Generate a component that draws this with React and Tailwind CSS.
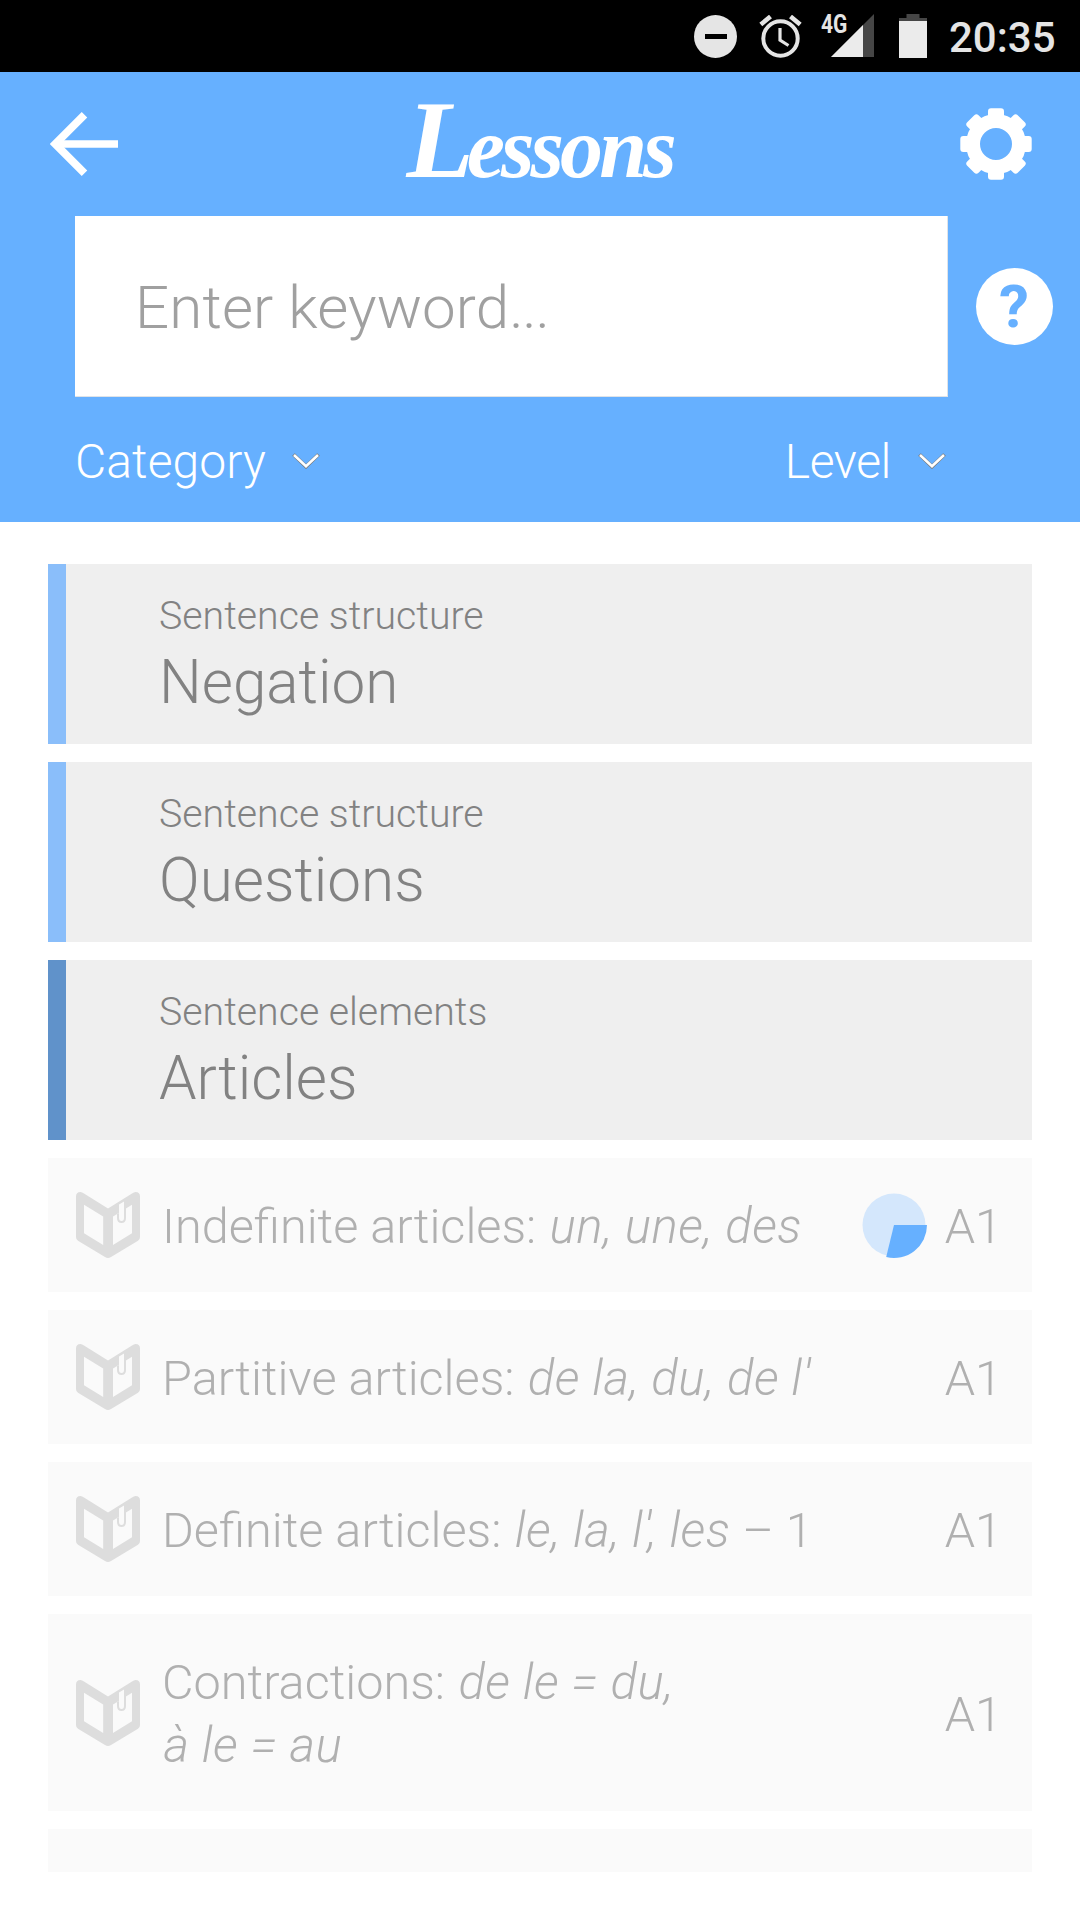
const GROUPS = [
  { topic: "Sentence structure", name: "Negation", bar: "bg-[#8abefa]" },
  { topic: "Sentence structure", name: "Questions", bar: "bg-[#8abefa]" },
  { topic: "Sentence elements", name: "Articles", bar: "bg-[#6092ca]" },
];

function Em({ children }) {
  return <i className="ml-[1.5px] text-[49.2px] tracking-[0.45px]">{children}</i>;
}

const LESSONS = [
  { text: <>Indefinite articles: <Em>un, une, des</Em></>, progress: true, height: "h-[134px]" },
  { text: <>Partitive articles: <Em>de la, du, de l'</Em></>, height: "h-[134px]" },
  { text: <>Definite articles: <Em>le, la, l<span className="tracking-[-4px]">'</span>, les</Em> – 1</>, height: "h-[134px]" },
  { text: <>Contractions: <Em>de le = du,</Em><br /><Em>à le = au</Em></>, height: "h-[197px]" },
];

function StatusBar() {
  return (
    <div className="flex h-[72px] items-start bg-black pl-[694px] text-[#e5e5e5]">
      <svg className="mt-[15px] h-[43px] w-[43px]" viewBox="0 0 43 43">
        <circle cx="21.5" cy="21.5" r="21.5" fill="#e5e5e5" />
        <path d="M11 21.5H33" stroke="#000" strokeWidth="5" />
      </svg>
      <svg className="mt-[15px] ml-[22px] h-[44px] w-[43px]" viewBox="0 0 43 44" fill="none" stroke="#e5e5e5">
        <circle cx="21.5" cy="23.5" r="17.2" strokeWidth="4" />
        <path d="M21 13V25.2L29.5 30.5" strokeWidth="3.2" />
        <path d="M1.8 9.5 11.5 1.5M41.2 9.5 31.5 1.5" strokeWidth="4.6" />
      </svg>
      <span className="mt-[13px] ml-[19px] w-[27px] origin-left scale-x-[0.84] text-[25px] leading-[24px] font-bold">4G</span>
      <svg className="mt-[14px] -ml-[17px] h-[43px] w-[43px]" viewBox="0 0 43 43">
        <path d="M0 43 43 0V43Z" fill="#464646" />
        <path d="M0 43 32 11V43Z" fill="#ebebeb" />
      </svg>
      <svg className="mt-[14px] ml-[25px] h-[44px] w-[28px]" viewBox="0 0 28 44">
        <path d="M7.5 0H20.5V4H28V8H0V4H7.5Z" fill="#464646" />
        <path d="M0 7H28V44H0Z" fill="#ebebeb" />
      </svg>
      <span className="mt-[13px] ml-[22px] text-[42px] leading-[50px] font-medium">20:35</span>
    </div>
  );
}

function Gear() {
  const angles = [0, 45, 90, 135, 180, 225, 270, 315];
  return (
    <svg className="h-[72px] w-[72px]" viewBox="-36 -36 72 72" fill="#fff">
      {angles.map((a) => (
        <rect key={a} x="-8" y="-35.7" width="16" height="16" rx="3" transform={`rotate(${a})`} />
      ))}
      <circle r="23" fill="none" stroke="#fff" strokeWidth="14" />
    </svg>
  );
}

function Chevron() {
  return (
    <svg className="h-[16px] w-[28px]" viewBox="0 0 28 16" fill="none">
      <path d="M1.5 1.5 14 13.5 26.5 1.5" stroke="#7b7b7b" strokeWidth="3.8" />
      <path d="M2 2 14 13.3 26 2" stroke="#fff" strokeWidth="2.6" />
    </svg>
  );
}

function Book() {
  return (
    <svg className="h-[66px] w-[64px] shrink-0" viewBox="0 0 64 66">
      <path
        fill="#dddddd"
        fillRule="evenodd"
        d="M0 4.5Q0 0 4.5 0Q6 0 8 1.5L32 16.5 56 1.5Q58 0 59.5 0Q64 0 64 4.5V45Q64 47.5 62 48.8L35 65Q32 67 29 65L2 48.8Q0 47.5 0 45ZM8 12.7V41.3L27.2 53V24.5ZM37 24.5V53L56 41.3V12.7Z"
      />
      <path d="M37 24.5 43 21V12L50 8V16L56 12.7 50 16V26Q50 31 45.5 31Q41 31 41 26V22Z" fill="#dddddd" />
      <path d="M43 12.5 48 9.5V26Q48 29 45.5 29Q43 29 43 26Z" fill="#fafafa" />
    </svg>
  );
}

function Progress() {
  return (
    <svg className="mt-[1px] h-[66px] w-[66px]" viewBox="0 0 66 66">
      <circle cx="32" cy="32" r="31.5" fill="#d4e7fc" />
      <path d="M32 32H65A33 33 0 0 1 24.2 64.1Z" fill="#66b0ff" />
    </svg>
  );
}

function Header() {
  return (
    <header className="h-[450px] bg-[#66b0ff] text-white">
      <div className="flex h-[144px] items-center justify-between pr-[48px] pl-[50px]">
        <svg className="h-[64px] w-[68px]" viewBox="0 0 68 64" fill="none" stroke="#fff">
          <path d="M34.5 2.8 5.3 32 34.5 61.2" strokeWidth="7.8" />
          <path d="M8 32H68" strokeWidth="7.5" />
        </svg>
        <h1 className="flex h-[144px] w-[265px] items-baseline font-['Liberation_Serif',serif] text-[86px] leading-[136px] font-bold tracking-[-3.9px] italic">
          <span className="text-[110px] leading-[136px] tracking-[-7px]">L</span>essons
        </h1>
        <Gear />
      </div>
      <div className="flex items-center pl-[75px]">
        <div className="flex h-[181px] w-[873px] items-center border-r border-b border-[#dfe3e8] bg-white pt-[4px] pl-[60px] text-[60px] leading-[70px] font-light tracking-[0.15px] text-[#a0a0a0]">
          Enter keyword<span className="tracking-[-1.2px]">...</span>
        </div>
        <div className="ml-[27.5px] flex h-[77px] w-[77px] items-center justify-center rounded-full bg-white text-[60px] leading-[70px] font-bold text-[#66b0ff]">
          ?
        </div>
      </div>
      <div className="flex h-[128px] items-center justify-between pr-[134px] pl-[75px] text-[48px] leading-[56px] font-light">
        <div className="flex items-center gap-[26px]"><span className="pt-[2px] tracking-[0.1px]">Category</span><Chevron /></div>
        <div className="flex items-center gap-[27px]"><span className="pt-[2px] tracking-[-0.4px]">Level</span><Chevron /></div>
      </div>
    </header>
  );
}

export default function App() {
  return (
    <div className="h-[1920px] w-[1080px] overflow-hidden bg-white font-['Roboto',sans-serif]">
      <StatusBar />
      <Header />
      <main className="flex flex-col gap-[18px] px-[48px] pt-[42px]">
        {GROUPS.map((g) => (
          <section key={g.name} className="flex h-[180px] bg-[#efefef] font-light text-[#828282]">
            <div className={`w-[18px] ${g.bar}`} />
            <div className="pt-[32px] pl-[93px]">
              <div className="text-[39.25px] leading-[40px]">{g.topic}</div>
              <div className="mt-[14px] text-[60.2px] leading-[65px]">{g.name}</div>
            </div>
          </section>
        ))}
        {LESSONS.map((l, i) => (
          <section key={i} className={`flex items-center bg-[#fafafa] pr-[30px] pl-[28px] text-[48.6px] leading-[63px] font-light text-[#b0b0b0] ${l.height}`}>
            <Book />
            <div className="flex-1 pt-[3px] pl-[22px] whitespace-nowrap">{l.text}</div>
            {l.progress && <Progress />}
            <div className="ml-[17px] pt-[3px]">A1</div>
          </section>
        ))}
        <div className="h-[43px] bg-[#fafafa]" />
      </main>
    </div>
  );
}
